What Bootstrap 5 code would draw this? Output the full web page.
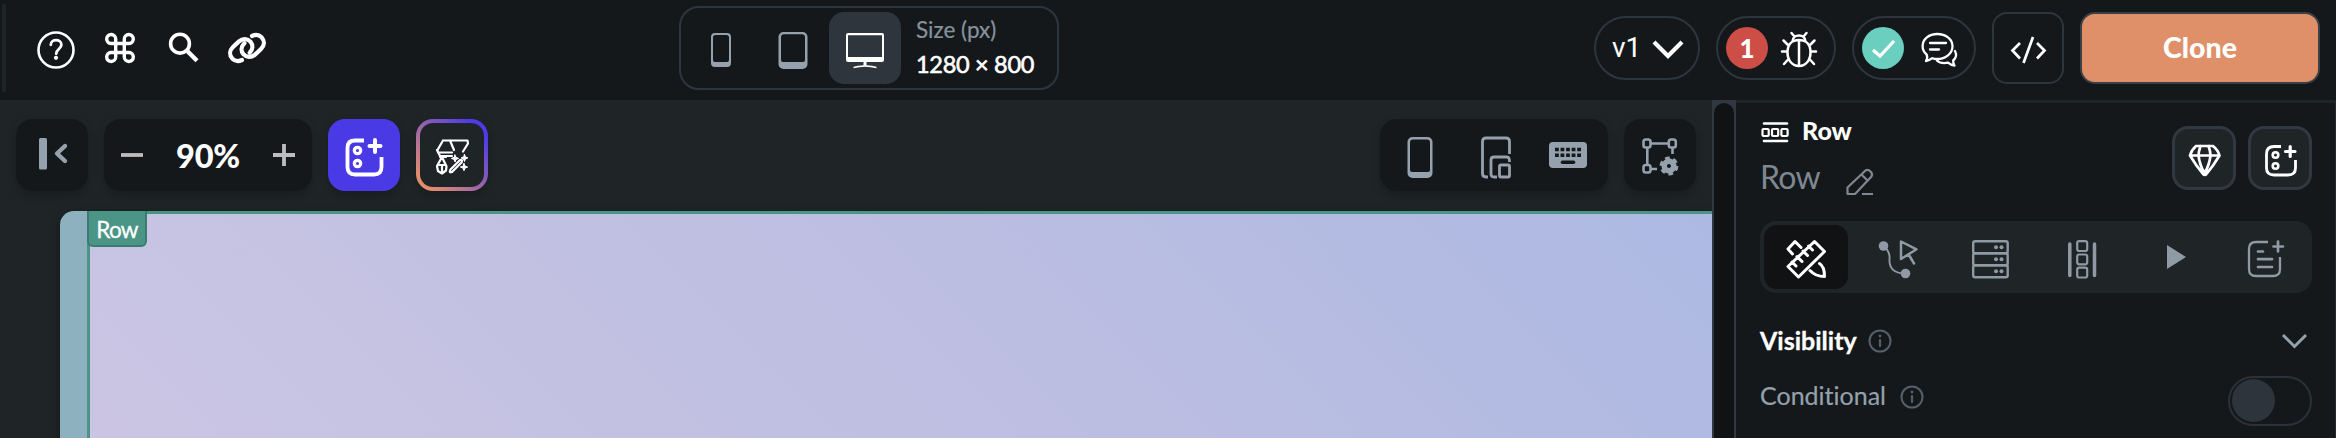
<!DOCTYPE html>
<html lang="en">
<head>
<meta charset="utf-8">
<title>Page builder</title>
<link href="https://cdn.jsdelivr.net/npm/bootstrap@5.3.0/dist/css/bootstrap.min.css" rel="stylesheet">
<script src="https://cdn.jsdelivr.net/npm/bootstrap@5.3.0/dist/js/bootstrap.bundle.min.js"></script>
<style>
:root{--ink:#14181b;--surface:#1f2427;--line:#2f353e;--muted:#95a1ac;--teal:#4b9587}
body{width:2336px;height:438px;overflow:hidden;background:var(--ink);color:#fff;font-family:Lato,"Liberation Sans",sans-serif;font-variant-ligatures:none}
svg{display:block;flex:none;fill:none;stroke:currentColor;stroke-width:3;stroke-linecap:round;stroke-linejoin:round}
.solid{fill:currentColor;stroke:none}
.topbar{height:100px;padding-left:2px}
.edge{width:4px;height:88px;margin-top:4px;background:var(--surface)}
.tools{margin-left:31px;gap:30px}
.devices{width:380px;height:84px;margin:6px 0 0 414px;padding:4px 0 0 0;border:2px solid var(--line);border-radius:20px;color:var(--muted)}
.dev{width:72px;height:72px;border-radius:15px}
.dev.active{background:#2e353d;color:#fff}
.size{margin-left:15px;white-space:nowrap}
.size div{height:35px;line-height:35px}
.pill{height:64px;border:2px solid var(--line);border-radius:32px}
.dot{width:42px;height:42px;border-radius:50%;font-size:26px;font-weight:900;line-height:42px}
.codebtn{width:72px;height:72px;border:2px solid var(--line);border-radius:15px}
.clone{width:240px;height:72px;border:2px solid #3a3f48;border-radius:15px;background:#df9069;font-size:28.5px;font-weight:900;line-height:64px;padding:0 0 3px;color:#fff}
.clone:hover{background:#df9069;color:#fff}
.work{width:1712px;height:338px;background:var(--surface)}
.bar{height:111px;padding:19px 16px 0}
.tile{height:72px;border-radius:17px;background:var(--ink);box-shadow:0 4px 9px rgba(0,0,0,.22);color:var(--muted)}
.sq{width:72px}
.add{background:#4a3ae6;color:#fff}
.magic{border:4px solid transparent;background:linear-gradient(var(--surface),var(--surface)) padding-box,linear-gradient(45deg,#e18d6d 12%,#4f3be8 85%) border-box;color:#fff}
.preview{height:227px;margin-left:60px;border-radius:14px 0 0 0;background:#8db1be;overflow:hidden;box-shadow:-2px 2px 8px rgba(0,0,0,.25)}
.rowbox{margin-left:27px;border-left:3px solid var(--teal);border-top:3px solid var(--teal);background:linear-gradient(45deg,#cbc5e3 0,#bcbee1 55%,#adb9e3 100%)}
.tag{width:60px;height:36px;margin:-3px 0 0 -3px;border-radius:0 0 6px 6px;background:#4b9587;border:2px solid #3c7c70;border-top:0;font-size:22.5px;line-height:37px;text-align:center;letter-spacing:-.7px;-webkit-text-stroke:.3px}
.split{width:24px;background:#323842;padding:3px 2px 0;height:338px}
.split div{height:340px;border-radius:10px 10px 0 0;background:#101213}
.side{width:600px;height:338px;border-top:3px solid var(--surface);border-right:1px solid #252b30;padding:0 23px 0 24px}
.sidebtn{width:64px;height:64px;border:3px solid #323842;border-radius:16px;background:var(--surface)}
.tabs{height:72px;border-radius:16px;background:var(--surface);color:#8f9aa5}
.tabs>div{width:92px}
.tabs .on{height:64px;width:84px;margin:4px;border-radius:13px;background:#101213;color:#fff}
.name{font-size:32px;color:#7f8791;line-height:36px;letter-spacing:-.7px}
.toggle{width:84px;height:50px;border:2px solid #2c3138;border-radius:25px;padding:1px 2px}
.toggle div{width:43px;height:43px;border-radius:50%;background:#2e343c}
</style>
</head>
<body>
<header class="topbar d-flex">
  <div class="edge"></div>
  <div class="tools d-flex">
    <svg width="38" height="100" viewBox="37 0 38 100"><circle cx="56" cy="50" r="17.5" stroke-width="2.6"/><path d="M50.8 44.8c0-6.2 10.6-6.2 10.6 0 0 4.2-5.2 4.3-5.2 9" stroke-width="2.8"/><circle cx="56" cy="57.8" r="2.1" class="solid"/></svg>
    <svg width="30" height="100" viewBox="105 0 30 100"><path stroke-width="3.4" d="M115.7 43.5H111a4.5 4.5 0 1 1 4.7-4.5v18a4.5 4.5 0 1 1-4.7-4.5h18a4.5 4.5 0 1 1-4.7 4.5V39a4.5 4.5 0 1 1 4.7 4.5z"/></svg>
    <svg width="35" height="100" viewBox="165 0 35 100" style="margin-right:-5px"><circle cx="180" cy="43.7" r="9.4" stroke-width="3.6"/><path d="M187.500 51.200l9.500 9.500" stroke-width="4.400" stroke-linecap="butt"/></svg>
    <svg width="42" height="100" viewBox="225 0 42 100" style="margin-right:-2px"><g stroke-width="4.200"><path d="M242 60c-3.500 1.600-7 1.200-9.600-1.300-3.300-3.600-3-8.200.6-11.700l6-5.600c3.700-3.300 8.600-3 11.600.4 2.700 3.300 2.400 7.700-1 11"/><path d="M242 60c-3.500 1.600-7 1.200-9.600-1.300-3.300-3.600-3-8.200.6-11.700l6-5.600c3.700-3.300 8.600-3 11.600.4 2.700 3.300 2.400 7.700-1 11" transform="rotate(180 247 48)"/></g></svg>
  </div>
  <div class="devices d-flex">
    <div class="dev d-flex ms-1"><svg width="72" height="72" viewBox="685 12 72 72"><path class="solid" fill-rule="evenodd" d="M715 33h12a4 4 0 0 1 4 4v26a4 4 0 0 1-4 4h-12a4 4 0 0 1-4-4V37a4 4 0 0 1 4-4zm.500 2a2.500 2.500 0 0 0-2.500 2.500v22.500a2 2 0 0 0 2 2h12a2 2 0 0 0 2-2V37.500a2.500 2.500 0 0 0-2.500-2.500z"/></svg></div>
    <div class="dev d-flex"><svg width="72" height="72" viewBox="757 12 72 72"><path class="solid" fill-rule="evenodd" d="M783.500 32h19a5 5 0 0 1 5 5v27a5 5 0 0 1-5 5h-19a5 5 0 0 1-5-5V37a5 5 0 0 1 5-5zm.500 2.200a3 3 0 0 0-3 3v22.800a2 2 0 0 0 2 2h20a2 2 0 0 0 2-2V37.200a3 3 0 0 0-3-3z"/></svg></div>
    <div class="dev active d-flex"><svg width="72" height="72" viewBox="829 12 72 72"><path class="solid" fill-rule="evenodd" d="M848 33h34a2 2 0 0 1 2 2v25a2 2 0 0 1-2 2h-34a2 2 0 0 1-2-2V35a2 2 0 0 1 2-2zm0 2.200V57h34V35.200zM863.500 62h3v3.200q6 .2 10 1.600v1.400q-11.500-3-23 0v-1.400q4-1.400 10-1.600z"/></svg></div>
    <div class="size"><div style="color:#87929c;font-size:22.500px;-webkit-text-stroke:.2px">Size (px)</div><div class="text-white" style="font-size:23.500px;letter-spacing:-.3px;-webkit-text-stroke:.6px">1280 × 800</div></div>
  </div>
  <div class="pill d-flex" style="width:106px;margin:16px 0 0 535px;padding-left:16px"><span style="font:400 28px/59px Roboto,sans-serif;width:40px">v1</span><svg width="32" height="60" viewBox="1652 18 32 60"><path d="M1654 42l14 14 14-14" stroke-width="4.200" stroke-linecap="butt" stroke-linejoin="miter"/></svg></div>
  <div class="pill d-flex" style="width:120px;margin:16px 0 0 16px;padding:9px 0 0 8px"><span class="dot text-center" style="background:#cd4d47">1</span>
    <svg width="40" height="42" viewBox="1779 27 40 42" style="margin-left:11px"><path stroke-width="2.500" d="M1799 40c-7.500 0-11.500 5-11.500 12.500 0 8 5 13.500 11.500 13.500s11.500-5.500 11.500-13.500c0-7.500-4-12.500-11.500-12.500zM1799 40v26M1792.500 41.500c0-8 13-8 13 0M1794.500 36.500l-3-3.500M1803.500 36.500l3-3.500M1788 45l-4.500-4.500M1810 45l4.500-4.500M1787 51.500h-5M1811 51.500h5M1788.500 59l-4.500 5M1809.500 59l4.500 5"/></svg></div>
  <div class="pill d-flex" style="width:124px;margin:16px 0 0 16px;padding:9px 0 0 8px"><span class="dot" style="background:#6bcfbf"><svg width="42" height="42" viewBox="1862 27 42 42"><path d="M1873 50l7 6 14-15" stroke-width="3.200" stroke-linecap="butt" stroke-linejoin="miter"/></svg></span>
    <svg width="42" height="42" viewBox="1919 27 42 42" style="margin-left:15px"><path stroke-width="2.300" d="M1926 61c1.500-2 1.600-4 .6-6.500-2.500-2-4-5-4-8.200 0-7.300 6.500-12.300 14.700-12.300s15.200 5 15.200 12.300-7 12.700-15.200 12.700c-2 0-3.500-.2-5-.8-2 1.500-4 2.500-6.300 2.800zM1955 51c2 4 1.200 7-1.800 9.500-.2 2 .4 3.500 1.300 5-2.500-.2-4.500-1-6.500-2.800-5 .9-8.500.3-11.200-2.200M1930 43h16M1930 49.500h9"/></svg></div>
  <div class="codebtn d-flex" style="margin:12px 0 0 16px"><svg width="68" height="68" viewBox="1994 14 68 68"><path d="M2020 43l-7.500 7.500 7.500 8M2037 43l7.500 7.500-7.500 8M2033 37l-9.500 26" stroke-width="2.700" stroke-linecap="butt" stroke-linejoin="miter"/></svg></div>
  <button class="btn clone" style="margin:12px 0 0 16px">Clone</button>
</header>
<div class="d-flex">
  <main class="work">
    <div class="bar d-flex gap-3">
      <div class="tile sq"><svg width="72" height="72" viewBox="16 119 72 72"><rect class="solid" x="39" y="138" width="8" height="31.500" rx="1.500"/><path d="M65 146l-8 7.500 8 7.500" stroke-width="4.400"/></svg></div>
      <div class="tile d-flex" style="width:208px"><svg width="72" height="72" viewBox="104 119 72 72" style="color:#bdbdbd"><path d="M121 155h22" stroke-width="3.800" stroke-linecap="butt"/></svg><span class="text-white text-center" style="width:64px;font-size:32.500px;font-weight:900;line-height:73px;letter-spacing:-.2px">90%</span><svg width="72" height="72" viewBox="240 119 72 72" style="color:#bdbdbd"><path d="M273 155h22m-11-11v22" stroke-width="3.800" stroke-linecap="butt"/></svg></div>
      <div class="tile sq add"><svg width="72" height="72" viewBox="328 119 72 72"><path d="M364 140.500h-9q-7.500 0-7.500 7.500v19q0 7.500 7.500 7.500h19q7.500 0 7.500-7.500v-10" stroke-width="3.800" stroke-linecap="butt"/><path d="M369.500 146h11m-5.500-6v12" stroke-width="4"/><circle cx="357.500" cy="150.500" r="3.200" stroke-width="3.200"/><circle cx="357.500" cy="163.500" r="3.200" stroke-width="3.200"/></svg></div>
      <div class="tile sq magic"><svg width="64" height="64" viewBox="420 123 64 64" stroke-linecap="butt"><g stroke-width="2.200"><path d="M443 140.500h24.500l.5 3-5 8M443 140.500l-5.500 9.500.5 2.500h14M450 140.500l4 9.500M437 150l3 6 12 0M440 157h6M442 157l-5 9 1 5 4 2.500 4-3 .500-4zM437.500 165h8M442 165v8"/><path d="M460 160l-9.500 9.500q-2 3.500 1.500 2.500l9.500-9.500q1.500-3.500-1.500-2.500z" /></g><path class="solid" d="M455 155l1 2.400 2.600 1-2.600 1-1 2.600-1-2.600-2.600-1 2.600-1zM464.500 154.500l1 2.400 2.400 1-2.400 1-1 2.600-1-2.600-2.400-1 2.400-1zM464 163.500l1 2.600 2.600 1-2.600 1-1 2.600-1-2.600-2.600-1 2.600-1z" style="stroke:currentColor;stroke-width:1"/></svg></div>
      <div class="tile d-flex ms-auto" style="width:228px">
        <svg width="228" height="72" viewBox="1380 119 228 72"><path class="solid" fill-rule="evenodd" d="M1412.500 137h15a5 5 0 0 1 5 5v31a5 5 0 0 1-5 5h-15a5 5 0 0 1-5-5v-31a5 5 0 0 1 5-5zm.500 2.500a3 3 0 0 0-3 3v27.500a2 2 0 0 0 2 2h16a2 2 0 0 0 2-2v-27.500a3 3 0 0 0-3-3z"/><path d="M1488 177h-2q-3.500 0-3.500-3.500v-32q0-3.500 3.500-3.500h20q3.500 0 3.500 3.500V154M1497 177h-3q-3 0-3-3v-14q0-3 3-3h13q2.500 0 2.500 5M1502 165h6q1.500 0 1.500 1.500v9q0 1.500-1.500 1.500h-7q-1.500 0-1.500-1.500v-9q0-1.500 1.500-1.500z" stroke-width="2.800" stroke-linecap="butt"/><rect class="solid" x="1549" y="142" width="38" height="26" rx="4"/><path d="M1555 149.500h26M1555 155.300h26" stroke="#14181b" stroke-width="3.500" stroke-dasharray="3.800 1.750" stroke-linecap="butt"/><path d="M1562.500 162.300h11" stroke="#14181b" stroke-width="3.600"/></svg></div>
      <div class="tile sq"><svg width="72" height="72" viewBox="1624 119 72 72"><g stroke-width="2.600"><rect x="1643.500" y="139.500" width="7" height="8" rx="2.200"/><rect x="1668.800" y="139.500" width="7" height="8" rx="2.200"/><rect x="1643.500" y="165" width="7" height="7.500" rx="2.200"/><path d="M1651 143.500h18M1647.300 148v17M1651 169h6M1672.500 148v6" stroke-linecap="butt"/></g><g class="solid"><path fill-rule="evenodd" d="M1669 158.500a7.500 7.500 0 1 0 .1 0zm0 5.500a2 2 0 1 1-.1 0z"/></g><circle cx="1669" cy="166" r="7.300" stroke-width="4.200" stroke-dasharray="4.300 3.340" stroke-linecap="butt"/></svg></div>
    </div>
    <div class="preview d-flex"><div class="rowbox flex-fill"><div class="tag">Row</div></div></div>
  </main>
  <div class="split"><div></div></div>
  <aside class="side">
    <div class="d-flex" style="height:118px">
      <div>
        <div class="d-flex" style="height:54px"><svg width="30" height="54" viewBox="1760 103 30 54" stroke-width="2"><path d="M1764 123.500h23M1764 141h23" stroke-width="2.600"/><g stroke-width="2.200"><rect x="1762.500" y="129" width="6.200" height="7" rx="1"/><rect x="1772" y="129" width="6.200" height="7" rx="1"/><rect x="1781.400" y="129" width="6.200" height="7" rx="1"/></g></svg><span style="font-size:25px;font-weight:900;line-height:54px;margin-left:12px">Row</span></div>
        <div class="d-flex name"><span style="width:84px;padding-top:2px">Row</span><svg width="32" height="40" viewBox="1844 157 32 40"><path d="M1847.500 194v-6.500l18-17q2.500-1.500 5 1t1 5l-16.500 17.500zM1861.500 174.500l6 6M1862 194h11" stroke-width="2.200" stroke-linecap="butt"/></svg></div>
      </div>
      <div class="d-flex ms-auto" style="gap:12px;padding-top:23px">
        <div class="sidebtn"><svg width="58" height="58" viewBox="2175 129 58 58"><path d="M2196 146h17q5 4 6.500 9.500-6 10-13 18.500-1.500 2-3.500 0-7-8.500-13-18.500 1.500-5.500 6-9.500zM2190.500 155.500h28M2200.500 146q-2 6-2 9.500 1 9 6 18 5-9 6-18 0-4-2-9.500" stroke-width="2.700"/></svg></div>
        <div class="sidebtn"><svg width="58" height="58" viewBox="2251 129 58 58"><path d="M2281 146.500h-7q-7.500 0-7.500 7.500v14q0 7 7.500 7h14q7.500 0 7.500-7v-8" stroke-width="2.800" stroke-linecap="butt"/><path d="M2285.500 151.500h9.500m-4.800-5v10" stroke-width="3.200"/><circle cx="2275.500" cy="155" r="2.800" stroke-width="2.600"/><circle cx="2275.500" cy="166" r="2.800" stroke-width="2.600"/></svg></div>
      </div>
    </div>
    <div class="tabs d-flex">
      <div class="on"><svg width="84" height="64" viewBox="1764 225 84 64" stroke-width="3.300"><path d="M1814.500 241.500l10 10-26 25.500-10.500-10.500zM1797 256.500l5 5M1803 251l4.500 4.500M1808.500 246l4 4M1792 262l4 4" /><path d="M1792.500 254l-4.500-5 7-7.500 6 6M1819.500 263.500q5 3 5 13-9 0-14.500-6"/></svg></div>
      <div><svg width="92" height="72" viewBox="1852 221 92 72"><circle class="solid" cx="1883.500" cy="246" r="4.800"/><circle class="solid" cx="1905.500" cy="273.500" r="4.800"/><path d="M1883.500 246c5 4 6.500 7.500 6 13-.500 9 4 14.500 16 14.500" stroke-width="1.900"/><path d="M1901 241.500l15.500 7.800-15.500 9.700zM1909 255l5 8.500" stroke-width="2.500"/></svg></div>
      <div><svg width="92" height="72" viewBox="1944 221 92 72"><g stroke-width="2.400"><rect x="1973.200" y="241.200" width="34.500" height="12" rx="2"/><rect x="1973.200" y="253.200" width="34.500" height="12" rx="2"/><rect x="1973.200" y="265.200" width="34.500" height="12" rx="2"/></g><g class="solid"><circle cx="1996" cy="247.300" r="2"/><circle cx="2001.500" cy="247.300" r="2"/><circle cx="1996" cy="259.300" r="2"/><circle cx="2001.500" cy="259.300" r="2"/><circle cx="1996" cy="271.300" r="2"/><circle cx="2001.500" cy="271.300" r="2"/></g></svg></div>
      <div><svg width="92" height="72" viewBox="2036 221 92 72"><path d="M2069.800 244v31.500M2094.500 244v31.500" stroke-width="3.500"/><g stroke-width="2.200"><rect x="2077.200" y="241.200" width="10" height="9.800" rx="2"/><rect x="2077.200" y="254.500" width="10" height="9.800" rx="2"/><rect x="2077.200" y="267.700" width="10" height="9.800" rx="2"/></g></svg></div>
      <div><svg width="92" height="72" viewBox="2128 221 92 72"><path class="solid" d="M2167 245v24l19-12z"/></svg></div>
      <div><svg width="92" height="72" viewBox="2220 221 92 72"><path d="M2268 242h-12q-7 0-7 7v20q0 7 7 7h17q7 0 7-7v-12" stroke-width="2.300" stroke-linecap="butt"/><path d="M2273.500 246.500h9.500m-5-5v10M2258 251.500h5M2258 259.200h14M2258 267h14" stroke-width="2.700"/></svg></div>
    </div>
    <div class="d-flex align-items-center" style="height:30px;margin-top:33px"><span style="font-size:25px;font-weight:700;width:100px;-webkit-text-stroke:.3px">Visibility</span><svg width="26" height="26" viewBox="-13 -13 26 26" style="margin-left:7px;color:#566069"><circle r="10.500" stroke-width="2"/><path d="M0-1v6" stroke-width="2.200"/><circle cy="-5" r="1.400" class="solid"/></svg><svg class="ms-auto" width="26" height="26" viewBox="2281 327 26 26" style="margin-right:5px;color:var(--muted)"><path d="M2283 334l11.500 11.500 11.500-11.500" stroke-width="3" stroke-linecap="butt" stroke-linejoin="miter"/></svg></div>
    <div class="d-flex" style="margin-top:20px"><span style="width:128px;font-size:25px;line-height:38px;color:var(--muted);-webkit-text-stroke:.2px">Conditional</span><svg width="26" height="26" viewBox="-13 -13 26 26" style="margin:8px 0 0 11px;color:#566069"><circle r="10.500" stroke-width="2"/><path d="M0-1v6" stroke-width="2.200"/><circle cy="-5" r="1.400" class="solid"/></svg><div class="toggle ms-auto"><div></div></div></div>
  </aside>
</div>
</body>
</html>
